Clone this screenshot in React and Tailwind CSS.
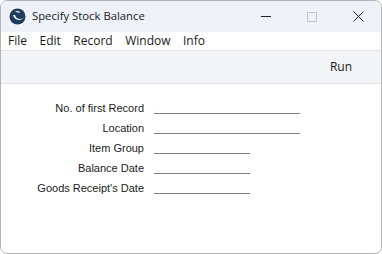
import React from "react";

const fields = [
  { label: "No. of first Record", long: true },
  { label: "Location", long: true },
  { label: "Item Group", long: false },
  { label: "Balance Date", long: false },
  { label: "Goods Receipt's Date", long: false },
];

function AppIcon() {
  return (
    <svg width="17" height="17" viewBox="0 0 17 17">
      <circle cx="8.5" cy="8.5" r="8" fill="#1f3b5c" />
      <path d="M4 7 C5 12 12 14 15 9 C13 12 7 12 6 7 Z" fill="#ffffff" />
      <path d="M6 4 C8 2 11 3 11 5 C9 4 7 4 6 4 Z" fill="#ffffff" />
    </svg>
  );
}

export default function App() {
  return (
    <div
      className="w-[382px] h-[254px] bg-white border border-[#b5b5b5] rounded-[7px] overflow-hidden flex flex-col text-[#1a1a1a]"
      style={{ fontFamily: '"Open Sans", "Liberation Sans", sans-serif' }}
    >
      {/* Title bar */}
      <div className="h-[31px] bg-[#eef1f7] flex items-center shrink-0">
        <div className="pl-[8px] pr-[6px] flex items-center">
          <AppIcon />
        </div>
        <span className="text-[11.3px]">Specify Stock Balance</span>
        <div className="ml-auto flex items-center h-full">
          <div className="w-[46px] flex justify-center">
            <div className="w-[10px] h-px bg-[#222]" />
          </div>
          <div className="w-[46px] flex justify-center">
            <div className="w-[10px] h-[10px] border border-[#c4c4c4]" />
          </div>
          <div className="w-[46px] flex justify-center">
            <svg width="11" height="11" viewBox="0 0 11 11">
              <path d="M0.5 0.5 L10.5 10.5 M10.5 0.5 L0.5 10.5" stroke="#222" strokeWidth="1" />
            </svg>
          </div>
        </div>
      </div>

      {/* Menu bar */}
      <div className="h-[18px] flex items-center gap-[12.5px] px-[7px] text-[12px] shrink-0">
        <span>File</span>
        <span>Edit</span>
        <span>Record</span>
        <span>Window</span>
        <span>Info</span>
      </div>

      {/* Toolbar */}
      <div className="h-[34px] bg-[#f3f4f7] border-t border-b border-[#e2e3e6] flex items-center justify-end pr-[29px] shrink-0">
        <span className="text-[12px]">Run</span>
      </div>

      {/* Form */}
      <div
        className="pt-[15px] flex flex-col gap-[2px] text-[11px]"
        style={{ fontFamily: '"Liberation Sans", Arial, sans-serif' }}
      >
        {fields.map((f) => (
          <div key={f.label} className="h-[18px] flex items-center">
            <span className="w-[143px] text-right">{f.label}</span>
            <div
              className={`ml-[10px] self-end mb-[3px] h-px bg-[#808080] ${f.long ? "w-[146px]" : "w-[96px]"}`}
            />
          </div>
        ))}
      </div>
    </div>
  );
}
